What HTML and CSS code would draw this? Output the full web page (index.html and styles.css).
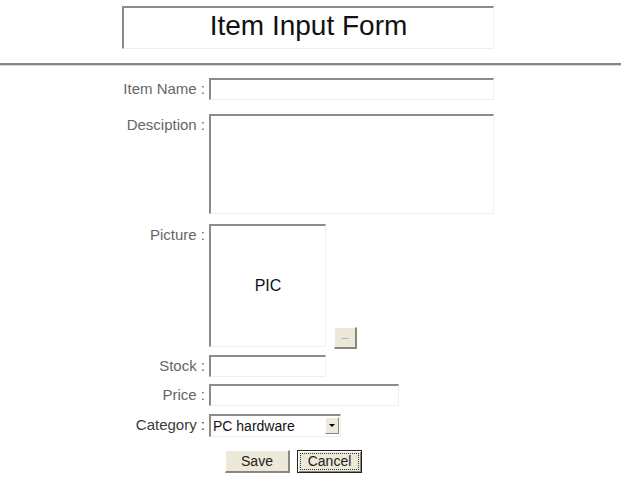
FILE: index.html
```html
<!DOCTYPE html>
<html>
<head>
    <link rel="stylesheet" href="styles.css">
</head>
<body>

    <div class="title_box">Item Input Form</div>
    <hr class="rule">

    <form class="item_form">
        <div class="row row_name">
            <label class="label">Item Name :</label>
            <input type="text" class="field name_field">
        </div>
        <div class="row row_desc">
            <label class="label">Desciption :</label>
            <textarea class="field desc_field"></textarea>
        </div>
        <div class="row row_pic">
            <label class="label">Picture :</label>
            <div class="field pic_box">PIC</div>
            <div class="btn browse_btn">...</div>
        </div>
        <div class="row row_stock">
            <label class="label">Stock :</label>
            <input type="text" class="field stock_field">
        </div>
        <div class="row row_price">
            <label class="label">Price :</label>
            <input type="text" class="field price_field">
        </div>
        <div class="row row_cat">
            <label class="label label_dark">Category :</label>
            <div class="select_wrap">
                <select class="field cat_field">
                    <option>PC hardware</option>
                    <option>Software</option>
                    <option>Accessories</option>
                </select>
                <span class="select_arrow"></span>
            </div>
        </div>
        <div class="buttons">
            <div class="btn form_btn">Save</div>
            <div class="btn form_btn cancel_btn"><span class="focus_ring">Cancel</span></div>
        </div>
    </form>

</body>
</html>
```

FILE: styles.css
```css
body {
    margin: 0;
    padding: 0;
    background: #fff;
    font-family: "Liberation Sans", Arial, sans-serif;
}

.title_box {
    box-sizing: border-box;
    width: 372px;
    height: 43px;
    margin: 6px 0 0 122px;
    border-top: 2px solid #8c8c84;
    border-left: 2px solid #8c8c84;
    border-right: 1px solid #f0f0ea;
    border-bottom: 1px solid #f0f0ea;
    text-align: center;
    font-size: 28px;
    line-height: 35px;
    color: #111;
}

.rule {
    margin: 14px 7px 0 0;
    height: 0;
    border: 0;
    border-top: 2px solid #858585;
    border-bottom: 1px solid #d8d8d8;
}

.item_form {
    margin-top: 12px;
}

.row {
    display: flex;
    align-items: flex-start;
}
.row_desc { margin-top: 14px; }
.row_pic { margin-top: 10px; }
.row_stock { margin-top: 6px; }
.row_price { margin-top: 7px; }
.row_cat { margin-top: 8px; }

.label {
    width: 205px;
    padding-right: 4px;
    text-align: right;
    font-size: 15px;
    line-height: 21px;
    color: #666;
}
.label_dark {
    color: #3a3a3a;
}

.field {
    box-sizing: border-box;
    margin: 0;
    padding: 0 3px;
    background: #fff;
    border-top: 2px solid #8c8c84;
    border-left: 2px solid #8c8c84;
    border-right: 1px solid #f0f0ea;
    border-bottom: 1px solid #f0f0ea;
    font-family: "Liberation Sans", Arial, sans-serif;
    font-size: 14px;
    outline: none;
}

.name_field { width: 285px; height: 22px; }
.desc_field { width: 285px; height: 100px; resize: none; }
.stock_field { width: 117px; height: 22px; }
.price_field { width: 190px; height: 22px; }

.pic_box {
    width: 117px;
    height: 123px;
    display: flex;
    align-items: center;
    justify-content: center;
    font-size: 16px;
    color: #111;
}

.btn {
    box-sizing: border-box;
    background: #ece9d8;
    border-top: 1px solid #fff;
    border-left: 1px solid #fff;
    border-right: 2px solid #8a877c;
    border-bottom: 2px solid #8a877c;
    color: #222;
    font-size: 14px;
    text-align: center;
    cursor: pointer;
}

.browse_btn {
    width: 23px;
    height: 22px;
    margin: 103px 0 0 8px;
    font-size: 9px;
    line-height: 16px;
    color: #666;
}

.select_wrap {
    position: relative;
}
.cat_field {
    width: 132px;
    height: 23px;
    padding: 0 0 0 2px;
    appearance: none;
    -webkit-appearance: none;
    color: #111;
    font-size: 14px;
}
.select_arrow {
    position: absolute;
    top: 3px;
    right: 2px;
    width: 14px;
    height: 17px;
    background: #ece9d8;
    border-top: 1px solid #fff;
    border-left: 1px solid #fff;
    border-right: 1px solid #8a877c;
    border-bottom: 1px solid #8a877c;
    box-sizing: border-box;
    pointer-events: none;
}
.select_arrow::after {
    content: "";
    position: absolute;
    left: 3px;
    top: 6px;
    border-left: 3px solid transparent;
    border-right: 3px solid transparent;
    border-top: 3px solid #000;
}

.buttons {
    display: flex;
    gap: 7px;
    margin: 13px 0 0 225px;
}
.form_btn {
    width: 65px;
    height: 23px;
    line-height: 20px;
}
.cancel_btn {
    border: 1px solid #222;
    box-shadow: inset 1px 1px 0 #fff, inset -1px -1px 0 #8a877c;
    padding: 2px;
    line-height: 15px;
}
.focus_ring {
    display: block;
    height: 17px;
    border: 1px dotted #333;
    box-sizing: border-box;
}
```
